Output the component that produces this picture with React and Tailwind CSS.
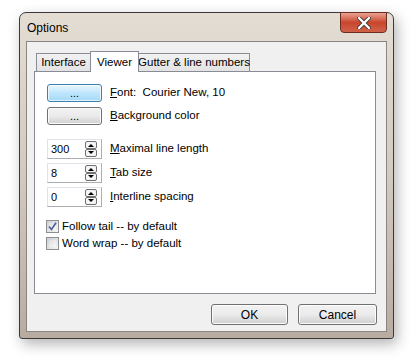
import React from "react";

const F = { fontFamily: '"Segoe UI", "Liberation Sans", Arial, sans-serif' };

function Btn({ children, focused, className = "" }) {
  return (
    <div
      className={
        "flex items-center justify-center rounded-[3px] border text-[11px] text-black " +
        (focused
          ? "border-[#3c7fb1] bg-gradient-to-b from-[#eaf6fd] via-[#bee6fd] to-[#a7d9f5] shadow-[inset_0_0_0_1px_#ffffffaa] "
          : "border-[#707070] bg-gradient-to-b from-[#f2f2f2] via-[#ebebeb] to-[#cfcfcf] shadow-[inset_0_0_0_1px_#fcfcfc] ") +
        className
      }
    >
      {children}
    </div>
  );
}

function Spin({ value, label, u }) {
  return (
    <div className="flex items-center h-[20px]">
      <div className="w-[55px] h-[20px] border border-[#abadb3] border-t-[#e2e3ea] border-l-[#e2e3ea] bg-white flex items-center justify-between pl-[3px] pr-[4px]">
        <span className="text-[11px] leading-none">{value}</span>
        <svg width="12" height="16" viewBox="0 0 12 16">
          <rect x="0.5" y="0.5" width="11" height="7" rx="1.5" fill="#f4f4f4" stroke="#707070" />
          <rect x="0.5" y="8.5" width="11" height="7" rx="1.5" fill="#f4f4f4" stroke="#707070" />
          <path d="M3 6 L6 3 L9 6 Z" fill="#000" />
          <path d="M3 10 L6 13 L9 10 Z" fill="#000" />
        </svg>
      </div>
      <span className="ml-[8px] text-[11.5px]">
        <span className="underline">{u}</span>
        {label}
      </span>
    </div>
  );
}

function Check({ checked, label }) {
  return (
    <div className="flex items-center h-[13px]">
      <div className="w-[13px] h-[13px] border border-[#8e8f8f] bg-gradient-to-br from-[#cbcfd5] to-[#f6f6f6] p-[2px]">
        <div className="w-full h-full bg-gradient-to-br from-[#dfdfdf] to-[#f8f8f8] relative">
          {checked && (
            <svg className="absolute -left-[1px] -top-[1px]" width="9" height="9" viewBox="0 0 9 9">
              <path d="M1 4.5 L3.5 7.5 L8 0.8" fill="none" stroke="#4a5f97" strokeWidth="1.6" />
            </svg>
          )}
        </div>
      </div>
      <span className="ml-[3px] text-[11.5px]">{label}</span>
    </div>
  );
}

export default function App() {
  return (
    <div className="w-[415px] h-[360px] bg-white overflow-hidden" style={F}>
      <div className="ml-[19px] mt-[12px] w-[375px] h-[327px] rounded-t-[7px] rounded-b-[3px] border border-[#3a3a3a] bg-gradient-to-b from-[#e4ddd4] via-[#d2c9bf] to-[#b8aca1] shadow-[3px_5px_14px_rgba(0,0,0,0.3)] flex flex-col">
        <div className="h-[28px] flex items-start justify-between shrink-0">
          <span className="ml-[7px] mt-[6px] text-[12px] text-black">Options</span>
          <div className="mr-[6px] -mt-[1px] w-[47px] h-[21px] rounded-b-[4px] border border-[#6d2d22] bg-gradient-to-b from-[#e8a291] via-[#c8452c] to-[#d0624a] flex items-center justify-center">
            <svg width="14" height="12" viewBox="0 0 14 12">
              <path d="M2 1 L12 11 M12 1 L2 11" stroke="#3b3b3b" strokeWidth="4" strokeLinecap="round" />
              <path d="M2 1 L12 11 M12 1 L2 11" stroke="#ffffff" strokeWidth="2.4" strokeLinecap="round" />
            </svg>
          </div>
        </div>
        <div className="mx-[6px] mb-[6px] flex-1 border border-[#8a8580] bg-[#f0f0f0] flex flex-col pl-[7px] pr-[10px]">
          <div className="flex items-end h-[29px] pl-[2px] text-[11.5px]">
            <div className="w-[55px] h-[18px] border border-b-0 border-[#898c95] bg-gradient-to-b from-[#f2f2f2] to-[#e3e3e3] flex items-center justify-center">Interface</div>
            <div className="w-[49px] h-[21px] -mb-px relative z-10 border border-b-0 border-[#898c95] bg-white flex items-start justify-center pt-[2px] -mx-[1px]">Viewer</div>
            <div className="w-[112px] h-[18px] border border-b-0 border-[#898c95] bg-gradient-to-b from-[#f2f2f2] to-[#e3e3e3] flex items-center justify-center whitespace-nowrap">Gutter &amp; line numbers</div>
          </div>
          <div className="h-[223px] border border-[#898c95] bg-white pl-[12px] pt-[12px] text-[11.5px]">
            <div className="flex items-center h-[18px]">
              <Btn focused className="w-[55px] h-[18px]">...</Btn>
              <span className="ml-[8px]">
                <span className="underline">F</span>ont:&nbsp; Courier New, 10
              </span>
            </div>
            <div className="flex items-center h-[18px] mt-[5px]">
              <Btn className="w-[55px] h-[18px]">...</Btn>
              <span className="ml-[8px]">
                <span className="underline">B</span>ackground color
              </span>
            </div>
            <div className="mt-[14px] flex flex-col gap-[4px]">
              <Spin value="300" u="M" label="aximal line length" />
              <Spin value="8" u="T" label="ab size" />
              <Spin value="0" u="I" label="nterline spacing" />
            </div>
            <div className="mt-[13px] -ml-[1px] flex flex-col gap-[4px]">
              <Check checked label="Follow tail -- by default" />
              <Check label="Word wrap -- by default" />
            </div>
          </div>
          <div className="flex justify-end gap-[10px] mt-[10px] -mr-[1px]">
            <Btn className="w-[77px] h-[21px] text-[12px]">OK</Btn>
            <Btn className="w-[79px] h-[21px] text-[12px]">Cancel</Btn>
          </div>
        </div>
      </div>
    </div>
  );
}
